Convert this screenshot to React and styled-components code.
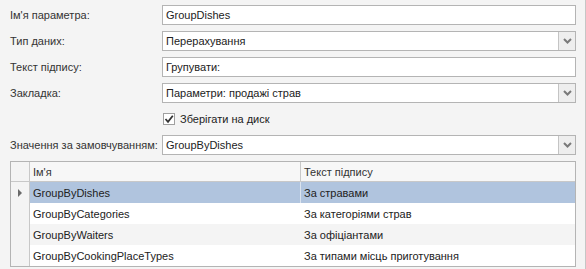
import React from 'react';
import styled, { createGlobalStyle } from 'styled-components';

const GlobalStyle = createGlobalStyle`
    html, body {
        margin: 0;
        padding: 0;
        background: #f4f4f4;
    }
    body {
        font-family: "Liberation Sans", Arial, sans-serif;
        font-size: 11px;
        color: #222;
    }
`;

const rows = [
    { name: 'GroupByDishes', caption: 'За стравами' },
    { name: 'GroupByCategories', caption: 'За категоріями страв' },
    { name: 'GroupByWaiters', caption: 'За офіціантами' },
    { name: 'GroupByCookingPlaceTypes', caption: 'За типами місць приготування' },
];

const Chevron = () => (
    <svg width="9" height="6" viewBox="0 0 9 6">
        <path d="M1 1 L4.5 4.5 L8 1" fill="none" stroke="#7a7a7a" strokeWidth="2" />
    </svg>
);

const Check = () => (
    <svg width="10" height="10" viewBox="0 0 10 10">
        <path d="M1.5 5 L4 7.8 L8.8 1.8" fill="none" stroke="#333" strokeWidth="1.8" />
    </svg>
);

const TextBox = ({ value }) => (
    <Field>
        <FieldText>{value}</FieldText>
    </Field>
);

const ComboBox = ({ value }) => (
    <Field>
        <FieldText>{value}</FieldText>
        <DropButton>
            <Chevron />
        </DropButton>
    </Field>
);

const App = () => {
    return (
        <>
            <GlobalStyle />
            <Window>
                <Panel>
                    <Form>
                        <Label>Ім'я параметра:</Label>
                        <TextBox value="GroupDishes" />
                        <Label>Тип даних:</Label>
                        <ComboBox value="Перерахування" />
                        <Label>Текст підпису:</Label>
                        <TextBox value="Групувати:" />
                        <Label>Закладка:</Label>
                        <ComboBox value="Параметри: продажі страв" />
                        <span />
                        <CheckRow>
                            <CheckBox>
                                <Check />
                            </CheckBox>
                            Зберігати на диск
                        </CheckRow>
                        <Label>Значення за замовчуванням:</Label>
                        <ComboBox value="GroupByDishes" />
                    </Form>
                    <Grid>
                        <HeaderRow>
                            <Indicator />
                            <HeadCell>Ім'я</HeadCell>
                            <HeadCell $last>Текст підпису</HeadCell>
                        </HeaderRow>
                        {rows.map((r, i) => (
                            <DataRow
                                key={r.name}
                                $selected={i === 0}
                                $alt={i > 0 && i % 2 === 0}
                            >
                                <Indicator>{i === 0 && <Arrow />}</Indicator>
                                <Cell $selected={i === 0}>{r.name}</Cell>
                                <Cell $last>{r.caption}</Cell>
                            </DataRow>
                        ))}
                    </Grid>
                </Panel>
            </Window>
        </>
    );
};

export default App;

const Window = styled.div`
    width: 586px;
    height: 269px;
    box-sizing: border-box;
    border-right: 1px solid #f4f4f4;
    display: flex;
`;

const Panel = styled.div`
    flex: 1;
    display: flex;
    flex-direction: column;
    padding: 5px 9px 0 10px;
    gap: 6px;
    border-right: 1px solid #c6c6c6;
`;

const Form = styled.div`
    display: grid;
    grid-template-columns: 152px 414px;
    grid-auto-rows: 20px;
    row-gap: 6px;
    align-items: center;
`;

const Label = styled.div`
    color: #333;
    white-space: nowrap;
`;

const Field = styled.div`
    display: flex;
    align-items: stretch;
    height: 20px;
    box-sizing: border-box;
    border: 1px solid #b4b4b4;
    background: #fff;
`;

const FieldText = styled.div`
    flex: 1;
    display: flex;
    align-items: center;
    padding-left: 3px;
    color: #222;
`;

const DropButton = styled.div`
    width: 16px;
    display: flex;
    align-items: center;
    justify-content: center;
    background: #eeeeee;
    border-left: 1px solid #c4c4c4;
`;

const CheckRow = styled.label`
    display: flex;
    align-items: center;
    gap: 5px;
    padding-left: 1px;
    color: #222;
`;

const CheckBox = styled.span`
    width: 12px;
    height: 12px;
    box-sizing: border-box;
    border: 1px solid #a0a0a0;
    background: #fff;
    display: flex;
    align-items: center;
    justify-content: center;
`;

const Grid = styled.div`
    width: 566px;
    border: 1px solid #b4b4b4;
    background: #fff;
    height: 106px;
    box-sizing: border-box;
    overflow: hidden;
`;

const HeaderRow = styled.div`
    display: grid;
    grid-template-columns: 19px 271px 1fr;
    height: 20px;
    background: #f7f7f7;
    border-bottom: 1px solid #c8c8c8;
    box-sizing: border-box;
`;

const DataRow = styled.div`
    display: grid;
    grid-template-columns: 19px 271px 1fr;
    height: 21px;
    background: ${(p) => (p.$selected ? '#b0c4de' : p.$alt ? '#f4f4f4' : '#ffffff')};
`;

const Indicator = styled.div`
    background: #f4f4f4;
    border-right: 1px solid #c8c8c8;
    display: flex;
    align-items: center;
    justify-content: center;
`;

const Arrow = styled.span`
    width: 0;
    height: 0;
    border-top: 4px solid transparent;
    border-bottom: 4px solid transparent;
    border-left: 4px solid #6a6a6a;
`;

const HeadCell = styled.div`
    display: flex;
    align-items: center;
    padding-left: 3px;
    color: #333;
    border-right: ${(p) => (p.$last ? 'none' : '1px solid #c8c8c8')};
`;

const Cell = styled.div`
    display: flex;
    align-items: center;
    padding-left: 3px;
    color: #222;
    border-right: ${(p) => (p.$last ? 'none' : p.$selected ? '1px solid #dbe3ee' : '1px solid transparent')};
`;
